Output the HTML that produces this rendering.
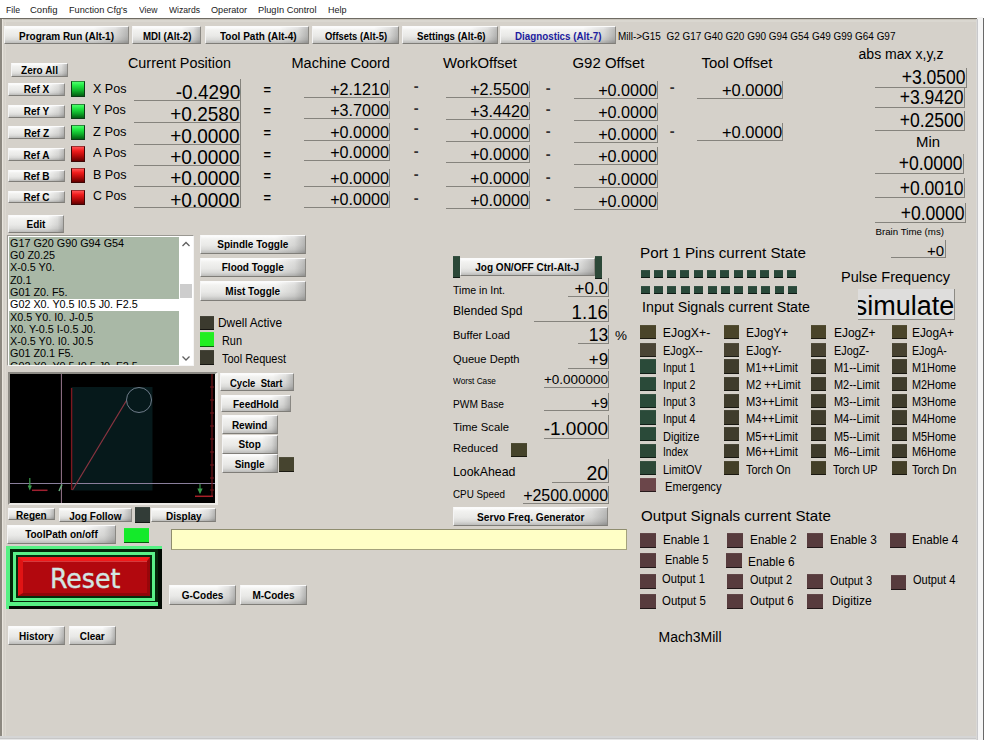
<!DOCTYPE html>
<html lang="en"><head><meta charset="utf-8"><title>Mach3 CNC Diagnostics</title>
<style>
html,body{margin:0;padding:0;}
body{width:984px;height:740px;overflow:hidden;background:#d5d1ca;position:relative;font-family:"Liberation Sans",sans-serif;color:#000;}
div,span,nav,section{position:absolute;box-sizing:border-box;}
.grp{left:0;top:0;width:0;height:0;}
.t{white-space:pre;line-height:1;}
.btn{background:linear-gradient(90deg,rgba(0,0,0,0) 0%,rgba(0,0,0,0) 72%,rgba(0,0,0,.09) 90%,rgba(0,0,0,.24) 100%),linear-gradient(180deg,#fdfdfd 0%,#f2f2f0 18%,#e9e9e7 55%,#dbdbd9 78%,#bcbcba 100%);border-top:1px solid #fbfbfb;border-left:1px solid #f4f4f4;border-right:1px solid #8a8883;border-bottom:1px solid #7f7d78;}
.lg{background:linear-gradient(180deg,#4cff6c 0%,#1fe642 28%,#0fae2a 62%,#045c12 100%);border:1px solid #0c3a16;border-top-color:#2a8a3a;}
.lr{background:linear-gradient(180deg,#ff5252 0%,#f01c1c 28%,#b80a0a 62%,#640000 100%);border:1px solid #3c0606;border-top-color:#a03030;}
.ld{border-bottom:1.2px solid rgba(0,0,0,.62);border-top:1px solid rgba(255,255,255,.06);}
</style></head>
<body>
<div id="chrome" class="grp" aria-label="Window frame">
<div style="left:0.00px;top:0.00px;width:984.00px;height:18.00px;background:#fff;"></div>
<div style="left:0.00px;top:18.00px;width:984.00px;height:722.00px;background:#d5d1ca;"></div>
<div style="left:0.00px;top:18.00px;width:977.00px;height:1.00px;background:#6f6b63;"></div>
<div style="left:0.00px;top:19.00px;width:977.00px;height:1.00px;background:#c9c5bc;"></div>
<div style="left:0.00px;top:20.00px;width:977.00px;height:2.00px;background:#dad7d0;"></div>
<div style="left:0.00px;top:19.00px;width:2.00px;height:721.00px;background:#8c8880;"></div>
<div style="left:2.00px;top:19.00px;width:1.00px;height:721.00px;background:#e9e5de;"></div>
<div style="left:3.00px;top:20.00px;width:1.00px;height:720.00px;background:#d9d5cd;"></div>
<div style="left:5.00px;top:20.00px;width:1.00px;height:716.00px;background:#dcd8d1;"></div>
<div style="left:0.00px;top:736.00px;width:984.00px;height:2.00px;background:#d5d5d5;"></div>
<div style="left:0.00px;top:738.00px;width:984.00px;height:1.00px;background:#c7c7c7;"></div>
<div style="left:0.00px;top:739.00px;width:984.00px;height:1.00px;background:#e7e7e7;"></div>
<div style="left:976.00px;top:19.00px;width:1.00px;height:721.00px;background:#d9d8d5;"></div>
<div style="left:977.00px;top:17.00px;width:6.00px;height:723.00px;background:#f5f5f5;"></div>
<div style="left:977.00px;top:19.00px;width:1.00px;height:721.00px;background:#c8c8cb;"></div>
<div style="left:983.00px;top:18.00px;width:1.00px;height:722.00px;background:#686868;"></div>
</div>
<nav id="menubar" class="grp" aria-label="Menu bar">
<span class="t" style="left:5.50px;top:5.00px;font-size:9.60px;color:#1a1a1a;transform:scaleX(0.906);transform-origin:0 50%;">File</span>
<span class="t" style="left:30.00px;top:5.00px;font-size:9.60px;color:#1a1a1a;transform:scaleX(0.991);transform-origin:0 50%;">Config</span>
<span class="t" style="left:69.00px;top:5.00px;font-size:9.60px;color:#1a1a1a;transform:scaleX(0.958);transform-origin:0 50%;">Function Cfg&#x27;s</span>
<span class="t" style="left:139.00px;top:5.00px;font-size:9.60px;color:#1a1a1a;transform:scaleX(0.896);transform-origin:0 50%;">View</span>
<span class="t" style="left:169.00px;top:5.00px;font-size:9.60px;color:#1a1a1a;transform:scaleX(0.895);transform-origin:0 50%;">Wizards</span>
<span class="t" style="left:211.00px;top:5.00px;font-size:9.60px;color:#1a1a1a;transform:scaleX(0.951);transform-origin:0 50%;">Operator</span>
<span class="t" style="left:258.00px;top:5.00px;font-size:9.60px;color:#1a1a1a;transform:scaleX(0.962);transform-origin:0 50%;">PlugIn Control</span>
<span class="t" style="left:328.00px;top:5.00px;font-size:9.60px;color:#1a1a1a;transform:scaleX(0.938);transform-origin:0 50%;">Help</span>
</nav>
<nav id="screen-tabs" class="grp" aria-label="Screen tabs">
<div class="btn" style="left:4.00px;top:26.00px;width:125.00px;height:18.00px;"><span class="t" style="left:14.00px;top:5.00px;font-size:10.30px;font-weight:bold;transform:scaleX(0.971);transform-origin:0 50%;">Program Run (Alt-1)</span></div>
<div class="btn" style="left:132.00px;top:26.00px;width:69.00px;height:18.00px;"><span class="t" style="left:9.50px;top:5.00px;font-size:10.30px;font-weight:bold;transform:scaleX(0.942);transform-origin:0 50%;">MDI (Alt-2)</span></div>
<div class="btn" style="left:205.00px;top:26.00px;width:103.50px;height:18.00px;"><span class="t" style="left:13.50px;top:5.00px;font-size:10.30px;font-weight:bold;transform:scaleX(0.972);transform-origin:0 50%;">Tool Path (Alt-4)</span></div>
<div class="btn" style="left:312.00px;top:26.00px;width:86.50px;height:18.00px;"><span class="t" style="left:12.00px;top:5.00px;font-size:10.30px;font-weight:bold;transform:scaleX(0.911);transform-origin:0 50%;">Offsets (Alt-5)</span></div>
<div class="btn" style="left:401.50px;top:26.00px;width:96.00px;height:18.00px;"><span class="t" style="left:14.00px;top:5.00px;font-size:10.30px;font-weight:bold;transform:scaleX(0.935);transform-origin:0 50%;">Settings (Alt-6)</span></div>
<div class="btn" style="left:499.50px;top:26.00px;width:116.50px;height:18.00px;"><span class="t" style="left:14.50px;top:5.00px;font-size:10.30px;font-weight:bold;color:#1c1c9e;transform:scaleX(0.951);transform-origin:0 50%;">Diagnostics (Alt-7)</span></div>
<span class="t" style="left:618.00px;top:31.00px;font-size:11.30px;transform:scaleX(0.881);transform-origin:0 50%;">Mill-&gt;G15  G2 G17 G40 G20 G90 G94 G54 G49 G99 G64 G97</span>
</nav>
<section id="axis-dros" class="grp" aria-label="Axis positions and offsets">
<span class="t" style="left:128.00px;top:56.00px;font-size:14.37px;">Current Position</span>
<span class="t" style="left:291.50px;top:56.00px;font-size:14.53px;">Machine Coord</span>
<span class="t" style="left:443.00px;top:56.00px;font-size:14.90px;">WorkOffset</span>
<span class="t" style="left:572.50px;top:56.00px;font-size:14.95px;">G92 Offset</span>
<span class="t" style="left:701.50px;top:56.00px;font-size:14.92px;">Tool Offset</span>
<span class="t" style="left:858.50px;top:47.00px;font-size:14.07px;">abs max x,y,z</span>
<div class="btn" style="left:11.00px;top:63.00px;width:57.00px;height:13.50px;"><span class="t" style="left:9.07px;top:2.00px;font-size:10.00px;font-weight:bold;">Zero All</span></div>
<div class="btn" style="left:8.00px;top:82.50px;width:57.00px;height:13.00px;"><span class="t" style="left:14.73px;top:1.50px;font-size:10.00px;font-weight:bold;">Ref X</span></div>
<div class="lg" style="left:70.50px;top:81.00px;width:14.50px;height:15.70px;"></div>
<span class="t" style="left:92.50px;top:83.00px;font-size:12.60px;transform:scaleX(0.996);transform-origin:0 50%;">X Pos</span>
<div class="btn" style="left:8.00px;top:104.50px;width:57.00px;height:13.00px;"><span class="t" style="left:14.80px;top:1.50px;font-size:10.00px;font-weight:bold;">Ref Y</span></div>
<div class="lg" style="left:70.50px;top:103.80px;width:14.50px;height:15.20px;"></div>
<span class="t" style="left:92.50px;top:104.00px;font-size:12.60px;">Y Pos</span>
<div class="btn" style="left:8.00px;top:126.00px;width:57.00px;height:13.00px;"><span class="t" style="left:15.00px;top:2.00px;font-size:10.00px;font-weight:bold;">Ref Z</span></div>
<div class="lg" style="left:70.50px;top:125.00px;width:14.50px;height:15.00px;"></div>
<span class="t" style="left:92.50px;top:126.00px;font-size:12.60px;transform:scaleX(1.019);transform-origin:0 50%;">Z Pos</span>
<div class="btn" style="left:8.00px;top:148.00px;width:57.00px;height:12.50px;"><span class="t" style="left:14.62px;top:2.00px;font-size:10.00px;font-weight:bold;">Ref A</span></div>
<div class="lr" style="left:70.50px;top:146.00px;width:14.50px;height:15.50px;"></div>
<span class="t" style="left:92.50px;top:147.00px;font-size:12.60px;transform:scaleX(1.017);transform-origin:0 50%;">A Pos</span>
<div class="btn" style="left:8.00px;top:169.50px;width:57.00px;height:12.50px;"><span class="t" style="left:14.45px;top:1.50px;font-size:10.00px;font-weight:bold;">Ref B</span></div>
<div class="lr" style="left:70.50px;top:168.00px;width:14.50px;height:15.00px;"></div>
<span class="t" style="left:92.50px;top:169.00px;font-size:12.60px;transform:scaleX(0.996);transform-origin:0 50%;">B Pos</span>
<div class="btn" style="left:8.00px;top:190.50px;width:57.00px;height:12.50px;"><span class="t" style="left:14.45px;top:1.50px;font-size:10.00px;font-weight:bold;">Ref C</span></div>
<div class="lr" style="left:70.50px;top:189.50px;width:14.50px;height:15.00px;"></div>
<span class="t" style="left:92.50px;top:190.00px;font-size:12.60px;transform:scaleX(0.976);transform-origin:0 50%;">C Pos</span>
<div class="dro" style="left:134.00px;top:78.70px;width:106.90px;height:22.00px;border-bottom:1px solid #85837d;border-right:1px solid #85837d;"></div>
<span class="t" style="left:168.51px;top:81.00px;font-size:21.00px;transform:scaleX(0.905);transform-origin:100% 50%;">-0.4290</span>
<div class="dro" style="left:134.00px;top:100.60px;width:106.90px;height:22.00px;border-bottom:1px solid #85837d;border-right:1px solid #85837d;"></div>
<span class="t" style="left:163.16px;top:103.00px;font-size:21.00px;transform:scaleX(0.905);transform-origin:100% 50%;">+0.2580</span>
<div class="dro" style="left:134.00px;top:122.60px;width:106.90px;height:22.00px;border-bottom:1px solid #85837d;border-right:1px solid #85837d;"></div>
<span class="t" style="left:163.16px;top:125.00px;font-size:21.00px;transform:scaleX(0.905);transform-origin:100% 50%;">+0.0000</span>
<div class="dro" style="left:134.00px;top:143.70px;width:106.90px;height:22.00px;border-bottom:1px solid #85837d;border-right:1px solid #85837d;"></div>
<span class="t" style="left:163.16px;top:146.00px;font-size:21.00px;transform:scaleX(0.905);transform-origin:100% 50%;">+0.0000</span>
<div class="dro" style="left:134.00px;top:165.40px;width:106.90px;height:22.00px;border-bottom:1px solid #85837d;border-right:1px solid #85837d;"></div>
<span class="t" style="left:163.16px;top:167.00px;font-size:21.00px;transform:scaleX(0.905);transform-origin:100% 50%;">+0.0000</span>
<div class="dro" style="left:134.00px;top:186.10px;width:106.90px;height:22.00px;border-bottom:1px solid #85837d;border-right:1px solid #85837d;"></div>
<span class="t" style="left:163.16px;top:189.00px;font-size:21.00px;transform:scaleX(0.905);transform-origin:100% 50%;">+0.0000</span>
<span class="t" style="left:263.50px;top:84.00px;font-size:12.82px;font-weight:bold;">=</span>
<span class="t" style="left:263.50px;top:105.00px;font-size:12.82px;font-weight:bold;">=</span>
<span class="t" style="left:263.50px;top:127.00px;font-size:12.82px;font-weight:bold;">=</span>
<span class="t" style="left:263.50px;top:149.00px;font-size:12.82px;font-weight:bold;">=</span>
<span class="t" style="left:263.50px;top:170.00px;font-size:12.82px;font-weight:bold;">=</span>
<span class="t" style="left:263.50px;top:192.00px;font-size:12.82px;font-weight:bold;">=</span>
<div class="dro" style="left:304.00px;top:80.00px;width:85.80px;height:17.70px;border-bottom:1px solid #85837d;border-right:1px solid #85837d;"></div>
<span class="t" style="left:327.87px;top:82.00px;font-size:16.80px;transform:scaleX(0.965);transform-origin:100% 50%;">+2.1210</span>
<div class="dro" style="left:304.00px;top:101.00px;width:85.80px;height:17.70px;border-bottom:1px solid #85837d;border-right:1px solid #85837d;"></div>
<span class="t" style="left:327.87px;top:103.00px;font-size:16.80px;transform:scaleX(0.965);transform-origin:100% 50%;">+3.7000</span>
<div class="dro" style="left:304.00px;top:123.00px;width:85.80px;height:17.70px;border-bottom:1px solid #85837d;border-right:1px solid #85837d;"></div>
<span class="t" style="left:327.87px;top:125.00px;font-size:16.80px;transform:scaleX(0.965);transform-origin:100% 50%;">+0.0000</span>
<div class="dro" style="left:304.00px;top:143.50px;width:85.80px;height:17.70px;border-bottom:1px solid #85837d;border-right:1px solid #85837d;"></div>
<span class="t" style="left:327.87px;top:145.00px;font-size:16.80px;transform:scaleX(0.965);transform-origin:100% 50%;">+0.0000</span>
<div class="dro" style="left:304.00px;top:169.00px;width:85.80px;height:17.70px;border-bottom:1px solid #85837d;border-right:1px solid #85837d;"></div>
<span class="t" style="left:327.87px;top:171.00px;font-size:16.80px;transform:scaleX(0.965);transform-origin:100% 50%;">+0.0000</span>
<div class="dro" style="left:304.00px;top:190.50px;width:85.80px;height:17.70px;border-bottom:1px solid #85837d;border-right:1px solid #85837d;"></div>
<span class="t" style="left:327.87px;top:192.00px;font-size:16.80px;transform:scaleX(0.965);transform-origin:100% 50%;">+0.0000</span>
<span class="t" style="left:413.80px;top:79.00px;font-size:14.63px;font-weight:bold;color:#333;">-</span>
<span class="t" style="left:413.80px;top:101.00px;font-size:14.63px;font-weight:bold;color:#333;">-</span>
<span class="t" style="left:413.80px;top:121.00px;font-size:14.63px;font-weight:bold;color:#333;">-</span>
<span class="t" style="left:413.80px;top:144.00px;font-size:14.63px;font-weight:bold;color:#333;">-</span>
<span class="t" style="left:413.80px;top:167.00px;font-size:14.63px;font-weight:bold;color:#333;">-</span>
<span class="t" style="left:413.80px;top:191.00px;font-size:14.63px;font-weight:bold;color:#333;">-</span>
<div class="dro" style="left:445.50px;top:80.50px;width:84.60px;height:17.70px;border-bottom:1px solid #85837d;border-right:1px solid #85837d;"></div>
<span class="t" style="left:468.17px;top:82.00px;font-size:16.80px;transform:scaleX(0.965);transform-origin:100% 50%;">+2.5500</span>
<div class="dro" style="left:445.50px;top:102.00px;width:84.60px;height:17.70px;border-bottom:1px solid #85837d;border-right:1px solid #85837d;"></div>
<span class="t" style="left:468.17px;top:104.00px;font-size:16.80px;transform:scaleX(0.965);transform-origin:100% 50%;">+3.4420</span>
<div class="dro" style="left:445.50px;top:124.00px;width:84.60px;height:17.70px;border-bottom:1px solid #85837d;border-right:1px solid #85837d;"></div>
<span class="t" style="left:468.17px;top:126.00px;font-size:16.80px;transform:scaleX(0.965);transform-origin:100% 50%;">+0.0000</span>
<div class="dro" style="left:445.50px;top:145.00px;width:84.60px;height:17.70px;border-bottom:1px solid #85837d;border-right:1px solid #85837d;"></div>
<span class="t" style="left:468.17px;top:147.00px;font-size:16.80px;transform:scaleX(0.965);transform-origin:100% 50%;">+0.0000</span>
<div class="dro" style="left:445.50px;top:169.00px;width:84.60px;height:17.70px;border-bottom:1px solid #85837d;border-right:1px solid #85837d;"></div>
<span class="t" style="left:468.17px;top:171.00px;font-size:16.80px;transform:scaleX(0.965);transform-origin:100% 50%;">+0.0000</span>
<div class="dro" style="left:445.50px;top:191.00px;width:84.60px;height:17.70px;border-bottom:1px solid #85837d;border-right:1px solid #85837d;"></div>
<span class="t" style="left:468.17px;top:193.00px;font-size:16.80px;transform:scaleX(0.965);transform-origin:100% 50%;">+0.0000</span>
<span class="t" style="left:545.80px;top:81.00px;font-size:14.63px;font-weight:bold;color:#333;">-</span>
<span class="t" style="left:545.80px;top:102.00px;font-size:14.63px;font-weight:bold;color:#333;">-</span>
<span class="t" style="left:545.80px;top:124.00px;font-size:14.63px;font-weight:bold;color:#333;">-</span>
<span class="t" style="left:545.80px;top:147.00px;font-size:14.63px;font-weight:bold;color:#333;">-</span>
<span class="t" style="left:545.80px;top:170.00px;font-size:14.63px;font-weight:bold;color:#333;">-</span>
<span class="t" style="left:545.80px;top:192.00px;font-size:14.63px;font-weight:bold;color:#333;">-</span>
<div class="dro" style="left:573.50px;top:81.00px;width:84.60px;height:17.70px;border-bottom:1px solid #85837d;border-right:1px solid #85837d;"></div>
<span class="t" style="left:596.17px;top:83.00px;font-size:16.80px;transform:scaleX(0.965);transform-origin:100% 50%;">+0.0000</span>
<div class="dro" style="left:573.50px;top:103.00px;width:84.60px;height:17.70px;border-bottom:1px solid #85837d;border-right:1px solid #85837d;"></div>
<span class="t" style="left:596.17px;top:105.00px;font-size:16.80px;transform:scaleX(0.965);transform-origin:100% 50%;">+0.0000</span>
<div class="dro" style="left:573.50px;top:125.00px;width:84.60px;height:17.70px;border-bottom:1px solid #85837d;border-right:1px solid #85837d;"></div>
<span class="t" style="left:596.17px;top:127.00px;font-size:16.80px;transform:scaleX(0.965);transform-origin:100% 50%;">+0.0000</span>
<div class="dro" style="left:573.50px;top:147.00px;width:84.60px;height:17.70px;border-bottom:1px solid #85837d;border-right:1px solid #85837d;"></div>
<span class="t" style="left:596.17px;top:149.00px;font-size:16.80px;transform:scaleX(0.965);transform-origin:100% 50%;">+0.0000</span>
<div class="dro" style="left:573.50px;top:170.00px;width:84.60px;height:17.70px;border-bottom:1px solid #85837d;border-right:1px solid #85837d;"></div>
<span class="t" style="left:596.17px;top:172.00px;font-size:16.80px;transform:scaleX(0.965);transform-origin:100% 50%;">+0.0000</span>
<div class="dro" style="left:573.50px;top:192.00px;width:84.60px;height:17.70px;border-bottom:1px solid #85837d;border-right:1px solid #85837d;"></div>
<span class="t" style="left:596.17px;top:194.00px;font-size:16.80px;transform:scaleX(0.965);transform-origin:100% 50%;">+0.0000</span>
<span class="t" style="left:669.80px;top:80.00px;font-size:14.63px;font-weight:bold;color:#333;">-</span>
<span class="t" style="left:669.80px;top:124.00px;font-size:14.63px;font-weight:bold;color:#333;">-</span>
<div class="dro" style="left:696.50px;top:81.00px;width:86.30px;height:17.70px;border-bottom:1px solid #85837d;border-right:1px solid #85837d;"></div>
<span class="t" style="left:720.96px;top:83.00px;font-size:16.80px;transform:scaleX(0.985);transform-origin:100% 50%;">+0.0000</span>
<div class="dro" style="left:696.50px;top:123.00px;width:86.30px;height:17.70px;border-bottom:1px solid #85837d;border-right:1px solid #85837d;"></div>
<span class="t" style="left:720.96px;top:125.00px;font-size:16.80px;transform:scaleX(0.985);transform-origin:100% 50%;">+0.0000</span>
<div class="dro" style="left:875.00px;top:68.00px;width:91.50px;height:20.00px;border-bottom:1px solid #85837d;border-right:1px solid #85837d;"></div>
<span class="t" style="left:894.79px;top:68.00px;font-size:19.40px;transform:scaleX(0.905);transform-origin:100% 50%;">+3.0500</span>
<div class="dro" style="left:875.00px;top:88.00px;width:89.50px;height:20.00px;border-bottom:1px solid #85837d;border-right:1px solid #85837d;"></div>
<span class="t" style="left:892.79px;top:88.00px;font-size:19.40px;transform:scaleX(0.905);transform-origin:100% 50%;">+3.9420</span>
<div class="dro" style="left:875.00px;top:111.00px;width:89.50px;height:20.00px;border-bottom:1px solid #85837d;border-right:1px solid #85837d;"></div>
<span class="t" style="left:892.79px;top:111.00px;font-size:19.40px;transform:scaleX(0.905);transform-origin:100% 50%;">+0.2500</span>
<div class="dro" style="left:875.00px;top:154.00px;width:88.50px;height:20.00px;border-bottom:1px solid #85837d;border-right:1px solid #85837d;"></div>
<span class="t" style="left:891.79px;top:154.00px;font-size:19.40px;transform:scaleX(0.905);transform-origin:100% 50%;">+0.0000</span>
<div class="dro" style="left:875.00px;top:178.00px;width:89.50px;height:20.00px;border-bottom:1px solid #85837d;border-right:1px solid #85837d;"></div>
<span class="t" style="left:892.79px;top:179.00px;font-size:19.40px;transform:scaleX(0.905);transform-origin:100% 50%;">+0.0010</span>
<div class="dro" style="left:875.00px;top:203.00px;width:90.50px;height:20.00px;border-bottom:1px solid #85837d;border-right:1px solid #85837d;"></div>
<span class="t" style="left:893.79px;top:204.00px;font-size:19.40px;transform:scaleX(0.905);transform-origin:100% 50%;">+0.0000</span>
<span class="t" style="left:916.00px;top:135.00px;font-size:14.91px;">Min</span>
<span class="t" style="left:875.50px;top:227.00px;font-size:9.71px;">Brain Time (ms)</span>
<div class="dro" style="left:891.00px;top:240.00px;width:54.50px;height:18.00px;border-bottom:1px solid #85837d;border-right:1px solid #85837d;"></div>
<span class="t" style="left:926.90px;top:243.00px;font-size:15.00px;">+0</span>
</section>
<section id="gcode-panel" class="grp" aria-label="G-code listing and coolant/spindle toggles">
<div class="btn" style="left:8.00px;top:215.00px;width:56.00px;height:17.50px;"><span class="t" style="left:17.55px;top:4.00px;font-size:10.00px;font-weight:bold;">Edit</span></div>
<div style="left:7.00px;top:235.00px;width:186.50px;height:131.00px;background:#fff;border:1px solid #f6f6f6;border-top-color:#9a9892;border-left-color:#9a9892;"></div>
<div class="gl" style="left:9.00px;top:237.00px;width:170.00px;height:128.00px;background:#a9b8a6;overflow:hidden;"></div>
<div style="left:9.00px;top:299.00px;width:170.00px;height:11.50px;background:#fff;"></div>
<div style="left:9px;top:237px;width:170px;height:128px;overflow:hidden;">
<span class="t" style="left:1.00px;top:1.00px;font-size:10.80px;">G17 G20 G90 G94 G54</span>
<span class="t" style="left:1.00px;top:13.00px;font-size:10.80px;">G0 Z0.25</span>
<span class="t" style="left:1.00px;top:25.00px;font-size:10.80px;">X-0.5 Y0.</span>
<span class="t" style="left:1.00px;top:38.00px;font-size:10.80px;">Z0.1</span>
<span class="t" style="left:1.00px;top:50.00px;font-size:10.80px;">G01 Z0. F5.</span>
<span class="t" style="left:1.00px;top:62.00px;font-size:10.80px;">G02 X0. Y0.5 I0.5 J0. F2.5</span>
<span class="t" style="left:1.00px;top:75.00px;font-size:10.80px;">X0.5 Y0. I0. J-0.5</span>
<span class="t" style="left:1.00px;top:87.00px;font-size:10.80px;">X0. Y-0.5 I-0.5 J0.</span>
<span class="t" style="left:1.00px;top:99.00px;font-size:10.80px;">X-0.5 Y0. I0. J0.5</span>
<span class="t" style="left:1.00px;top:111.00px;font-size:10.80px;">G01 Z0.1 F5.</span>
<span class="t" style="left:1.00px;top:124.00px;font-size:10.80px;">G02 X0. Y0.5 I0.5 J0. F2.5</span>
</div>
<div style="left:179.00px;top:237.00px;width:13.50px;height:128.00px;background:#fff;"></div>
<div style="left:180.00px;top:284.00px;width:11.50px;height:13.50px;background:#cdcdcd;"></div>
<svg style="position:absolute;left:179px;top:237px" width="14" height="128" viewBox="0 0 14 128"><path d="M3.5 9 L7 5.5 L10.5 9" fill="none" stroke="#606060" stroke-width="1.3"/><path d="M3.5 119.5 L7 123 L10.5 119.5" fill="none" stroke="#606060" stroke-width="1.3"/></svg>
<div class="btn" style="left:200.00px;top:234.80px;width:105.50px;height:18.80px;"><span class="t" style="left:16.30px;top:4.20px;font-size:10.00px;font-weight:bold;">Spindle Toggle</span></div>
<div class="btn" style="left:200.00px;top:258.00px;width:105.50px;height:18.80px;"><span class="t" style="left:20.75px;top:4.00px;font-size:10.00px;font-weight:bold;">Flood Toggle</span></div>
<div class="btn" style="left:200.00px;top:281.20px;width:105.50px;height:19.60px;"><span class="t" style="left:24.35px;top:4.80px;font-size:10.00px;font-weight:bold;">Mist Toggle</span></div>
<div class="ld" style="left:200.00px;top:315.50px;width:14.00px;height:14.00px;background:#3b3a2e;"></div>
<div class="ld" style="left:200.00px;top:332.00px;width:14.00px;height:15.00px;background:#22ee22;"></div>
<div class="ld" style="left:200.00px;top:350.00px;width:14.00px;height:14.50px;background:#3b3a2e;"></div>
<span class="t" style="left:218.00px;top:316.00px;font-size:13.00px;transform:scaleX(0.913);transform-origin:0 50%;">Dwell Active</span>
<span class="t" style="left:222.00px;top:335.00px;font-size:12.60px;transform:scaleX(0.865);transform-origin:0 50%;">Run</span>
<span class="t" style="left:222.00px;top:353.00px;font-size:12.60px;transform:scaleX(0.870);transform-origin:0 50%;">Tool Request</span>
</section>
<section id="toolpath-panel" class="grp" aria-label="Tool path display and run controls">
<div style="left:8.00px;top:372.00px;width:209.50px;height:133.00px;background:#000;border:2px solid #eeece8;border-right-width:3px;border-top-color:#8c8a84;border-left-color:#8c8a84;"></div>
<svg style="position:absolute;left:10px;top:374px" width="204.5" height="129" viewBox="10 374 204.5 129">
<rect x="71.5" y="387" width="81" height="103.5" fill="#06191b"/>
<line x1="61.4" y1="374" x2="61.4" y2="503" stroke="#9a7890" stroke-width="1"/>
<line x1="10" y1="483.5" x2="216" y2="483.5" stroke="#8a7f9c" stroke-width="1"/>
<line x1="71.6" y1="388" x2="71.6" y2="490" stroke="#7c1820" stroke-width="1.4"/>
<line x1="72.5" y1="490" x2="126.5" y2="400.5" stroke="#8a3440" stroke-width="1.2"/>
<circle cx="139" cy="400" r="12.5" fill="none" stroke="#6f7c8a" stroke-width="1"/>
<line x1="212" y1="374" x2="212" y2="497" stroke="#74141a" stroke-width="1.2"/>
<path d="M210 387h4M210 400h4M210 413h4M210 426h4M210 439h4M210 452h4M210 465h4M210 478h4M210 490h4" stroke="#74141a" stroke-width="1"/>
<line x1="32" y1="490.3" x2="47.5" y2="490.3" stroke="#a02030" stroke-width="1.5"/>
<path d="M29.8 478v9M28.3 485.5l1.5 3.5l1.5-3.5" stroke="#3a9a4c" stroke-width="1.2" fill="none"/>
<path d="M59 491l3-6.5" stroke="#6ab080" stroke-width="1.5"/>
<path d="M200 484v8M198.2 489l1.8 4l1.8-4z" stroke="#3a9a4c" stroke-width="1.1" fill="#3a9a4c"/>
<line x1="195" y1="496.3" x2="213" y2="496.3" stroke="#a82028" stroke-width="1.5"/>
</svg>
<div class="btn" style="left:7.50px;top:508.20px;width:47.80px;height:12.10px;"><span class="t" style="left:7.62px;top:1.80px;font-size:10.00px;font-weight:bold;">Regen</span></div>
<div class="btn" style="left:58.50px;top:508.30px;width:73.80px;height:14.00px;"><span class="t" style="left:9.78px;top:2.70px;font-size:10.00px;font-weight:bold;">Jog Follow</span></div>
<div class="ld" style="left:135.20px;top:507.40px;width:14.80px;height:15.40px;background:#323c37;"></div>
<div class="btn" style="left:151.30px;top:508.30px;width:65.00px;height:14.00px;"><span class="t" style="left:13.72px;top:2.70px;font-size:10.00px;font-weight:bold;">Display</span></div>
<div class="btn" style="left:7.30px;top:524.50px;width:108.30px;height:19.00px;"><span class="t" style="left:16.85px;top:4.50px;font-size:10.00px;font-weight:bold;">ToolPath on/off</span></div>
<div class="ld" style="left:124.00px;top:528.30px;width:25.00px;height:15.10px;background:#14ea2a;"></div>
<div style="left:170.70px;top:528.80px;width:456.30px;height:21.10px;background:#ffffc6;border:1.2px solid #a4a27c;border-top-color:#8f8d6e;border-left-color:#8f8d6e;"></div>
<div class="btn" style="left:220.00px;top:373.00px;width:74.00px;height:18.40px;"><span class="t" style="left:9.00px;top:5.00px;font-size:10.20px;font-weight:bold;transform:scaleX(0.933);transform-origin:0 50%;">Cycle  Start</span></div>
<div class="btn" style="left:220.50px;top:394.50px;width:70.50px;height:17.80px;"><span class="t" style="left:11.47px;top:4.50px;font-size:10.00px;font-weight:bold;">FeedHold</span></div>
<div class="btn" style="left:221.50px;top:415.30px;width:56.30px;height:18.50px;"><span class="t" style="left:9.38px;top:4.70px;font-size:10.00px;font-weight:bold;">Rewind</span></div>
<div class="btn" style="left:221.50px;top:434.60px;width:56.30px;height:19.00px;"><span class="t" style="left:16.05px;top:4.40px;font-size:10.00px;font-weight:bold;">Stop</span></div>
<div class="btn" style="left:221.50px;top:454.20px;width:56.30px;height:18.50px;"><span class="t" style="left:12.15px;top:4.80px;font-size:10.00px;font-weight:bold;">Single</span></div>
<div class="ld" style="left:279.30px;top:456.90px;width:15.10px;height:15.50px;background:#46442f;"></div>
</section>
<section id="reset-panel" class="grp" aria-label="Reset and reference buttons">
<div style="left:6.40px;top:545.60px;width:155.60px;height:63.10px;background:#030a04;"></div>
<div style="left:6.40px;top:545.60px;width:151.30px;height:60.40px;background:#56f084;"></div>
<div style="left:6.40px;top:545.60px;width:155.60px;height:3.20px;background:#56f084;"></div>
<div style="left:6.40px;top:545.60px;width:3.10px;height:63.10px;background:#56f084;"></div>
<div style="left:9.50px;top:548.80px;width:148.20px;height:52.80px;background:#04260a;"></div>
<div style="left:12.80px;top:552.00px;width:142.30px;height:49.40px;background:#052c0c;border:3px solid #5af088;"></div>
<div style="left:18.30px;top:556.60px;width:131.70px;height:39.30px;background:#b2080e;border-top:4.5px solid #f01a1a;border-left:5px solid #e01414;border-right:3px solid #98060a;border-bottom:3.5px solid #90060a;"></div>
<div style="left:23.30px;top:560.60px;width:123.70px;height:1.00px;background:rgba(255,120,120,.45);"></div>
<span class="t" style="left:50.30px;top:565.00px;font-size:27.30px;color:#d2e6e2;font-family:'DejaVu Sans Condensed', 'DejaVu Sans', 'Liberation Sans', sans-serif;font-stretch:condensed;transform:scaleX(1.027);transform-origin:0 50%;-webkit-text-stroke:0.35px #d2e6e2;">Reset</span>
<div class="btn" style="left:169.00px;top:585.30px;width:67.10px;height:19.30px;"><span class="t" style="left:11.73px;top:4.70px;font-size:10.00px;font-weight:bold;">G-Codes</span></div>
<div class="btn" style="left:239.70px;top:585.30px;width:67.60px;height:19.30px;"><span class="t" style="left:11.70px;top:4.70px;font-size:10.00px;font-weight:bold;">M-Codes</span></div>
<div class="btn" style="left:8.00px;top:626.00px;width:56.50px;height:18.50px;"><span class="t" style="left:10.03px;top:5.00px;font-size:10.00px;font-weight:bold;">History</span></div>
<div class="btn" style="left:69.00px;top:626.00px;width:46.50px;height:18.50px;"><span class="t" style="left:9.75px;top:5.00px;font-size:10.00px;font-weight:bold;">Clear</span></div>
</section>
<section id="timing-panel" class="grp" aria-label="Jog and timing diagnostics">
<div class="ld" style="left:453.00px;top:256.00px;width:7.00px;height:21.50px;background:#2c4838;"></div>
<div class="ld" style="left:594.50px;top:256.00px;width:7.50px;height:23.00px;background:#2c4838;"></div>
<div class="btn" style="left:460.00px;top:258.00px;width:134.50px;height:18.00px;"><span class="t" style="left:14.30px;top:4.00px;font-size:10.00px;font-weight:bold;">Jog ON/OFF Ctrl-Alt-J</span></div>
<span class="t" style="left:453.00px;top:284.00px;font-size:11.60px;transform:scaleX(0.913);transform-origin:0 50%;">Time in Int.</span>
<div class="dro" style="left:568.00px;top:278.00px;width:40.90px;height:19.00px;border-bottom:1px solid #85837d;border-right:1px solid #85837d;"></div>
<span class="t" style="left:574.53px;top:280.00px;font-size:17.00px;">+0.0</span>
<span class="t" style="left:453.00px;top:305.00px;font-size:12.14px;">Blended Spd</span>
<div class="dro" style="left:534.00px;top:299.00px;width:74.90px;height:23.00px;border-bottom:1px solid #85837d;border-right:1px solid #85837d;"></div>
<span class="t" style="left:570.17px;top:303.00px;font-size:19.50px;transform:scaleX(0.960);transform-origin:100% 50%;">1.16</span>
<span class="t" style="left:453.00px;top:330.00px;font-size:11.06px;">Buffer Load</span>
<div class="dro" style="left:578.00px;top:325.00px;width:30.90px;height:19.00px;border-bottom:1px solid #85837d;border-right:1px solid #85837d;"></div>
<span class="t" style="left:588.68px;top:327.00px;font-size:17.50px;">13</span>
<span class="t" style="left:615.00px;top:329.00px;font-size:13.48px;">%</span>
<span class="t" style="left:453.00px;top:354.00px;font-size:11.18px;">Queue Depth</span>
<div class="dro" style="left:567.50px;top:349.00px;width:41.40px;height:20.00px;border-bottom:1px solid #85837d;border-right:1px solid #85837d;"></div>
<span class="t" style="left:588.72px;top:351.00px;font-size:17.00px;">+9</span>
<span class="t" style="left:453.00px;top:376.00px;font-size:9.40px;transform:scaleX(0.879);transform-origin:0 50%;">Worst Case</span>
<div class="dro" style="left:544.00px;top:371.00px;width:64.90px;height:17.00px;border-bottom:1px solid #85837d;border-right:1px solid #85837d;"></div>
<span class="t" style="left:543.91px;top:373.00px;font-size:13.50px;">+0.000000</span>
<span class="t" style="left:453.00px;top:399.00px;font-size:11.00px;transform:scaleX(0.927);transform-origin:0 50%;">PWM Base</span>
<div class="dro" style="left:544.00px;top:393.00px;width:64.90px;height:18.00px;border-bottom:1px solid #85837d;border-right:1px solid #85837d;"></div>
<span class="t" style="left:591.00px;top:395.00px;font-size:15.00px;">+9</span>
<span class="t" style="left:453.00px;top:422.00px;font-size:11.28px;">Time Scale</span>
<div class="dro" style="left:544.00px;top:415.00px;width:64.90px;height:23.50px;border-bottom:1px solid #85837d;border-right:1px solid #85837d;"></div>
<span class="t" style="left:543.69px;top:419.00px;font-size:19.00px;">-1.0000</span>
<span class="t" style="left:453.00px;top:443.00px;font-size:11.24px;">Reduced</span>
<div class="ld" style="left:511.00px;top:443.00px;width:16.00px;height:14.00px;background:#45432a;"></div>
<span class="t" style="left:453.00px;top:466.00px;font-size:12.35px;">LookAhead</span>
<div class="dro" style="left:552.00px;top:459.00px;width:56.90px;height:24.00px;border-bottom:1px solid #85837d;border-right:1px solid #85837d;"></div>
<span class="t" style="left:586.46px;top:464.00px;font-size:19.50px;">20</span>
<span class="t" style="left:453.00px;top:489.00px;font-size:11.00px;transform:scaleX(0.895);transform-origin:0 50%;">CPU Speed</span>
<div class="dro" style="left:523.00px;top:486.00px;width:85.90px;height:17.50px;border-bottom:1px solid #85837d;border-right:1px solid #85837d;"></div>
<span class="t" style="left:523.14px;top:488.00px;font-size:16.00px;">+2500.0000</span>
<div class="btn" style="left:453.00px;top:506.80px;width:154.70px;height:18.90px;"><span class="t" style="left:23.00px;top:5.20px;font-size:10.30px;font-weight:bold;transform:scaleX(0.988);transform-origin:0 50%;">Servo Freq. Generator</span></div>
</section>
<section id="signals-panel" class="grp" aria-label="Port pins, input and output signals">
<span class="t" style="left:640.00px;top:245.00px;font-size:15.24px;">Port 1 Pins current State</span>
<div class="ld" style="left:640.50px;top:269.50px;width:9.00px;height:8.00px;background:#29493a;"></div>
<div class="ld" style="left:653.82px;top:269.50px;width:9.00px;height:8.00px;background:#29493a;"></div>
<div class="ld" style="left:667.14px;top:269.50px;width:9.00px;height:8.00px;background:#29493a;"></div>
<div class="ld" style="left:680.45px;top:269.50px;width:9.00px;height:8.00px;background:#29493a;"></div>
<div class="ld" style="left:693.77px;top:269.50px;width:9.00px;height:8.00px;background:#29493a;"></div>
<div class="ld" style="left:707.09px;top:269.50px;width:9.00px;height:8.00px;background:#29493a;"></div>
<div class="ld" style="left:720.41px;top:269.50px;width:9.00px;height:8.00px;background:#29493a;"></div>
<div class="ld" style="left:733.73px;top:269.50px;width:9.00px;height:8.00px;background:#29493a;"></div>
<div class="ld" style="left:747.05px;top:269.50px;width:9.00px;height:8.00px;background:#29493a;"></div>
<div class="ld" style="left:760.36px;top:269.50px;width:9.00px;height:8.00px;background:#29493a;"></div>
<div class="ld" style="left:773.68px;top:269.50px;width:9.00px;height:8.00px;background:#29493a;"></div>
<div class="ld" style="left:787.00px;top:269.50px;width:9.00px;height:8.00px;background:#29493a;"></div>
<div class="ld" style="left:640.50px;top:286.00px;width:9.00px;height:8.00px;background:#29493a;"></div>
<div class="ld" style="left:653.91px;top:286.00px;width:9.00px;height:8.00px;background:#29493a;"></div>
<div class="ld" style="left:667.32px;top:286.00px;width:9.00px;height:8.00px;background:#29493a;"></div>
<div class="ld" style="left:680.73px;top:286.00px;width:9.00px;height:8.00px;background:#29493a;"></div>
<div class="ld" style="left:694.14px;top:286.00px;width:9.00px;height:8.00px;background:#29493a;"></div>
<div class="ld" style="left:707.55px;top:286.00px;width:9.00px;height:8.00px;background:#29493a;"></div>
<div class="ld" style="left:720.95px;top:286.00px;width:9.00px;height:8.00px;background:#29493a;"></div>
<div class="ld" style="left:734.36px;top:286.00px;width:9.00px;height:8.00px;background:#29493a;"></div>
<div class="ld" style="left:747.77px;top:286.00px;width:9.00px;height:8.00px;background:#29493a;"></div>
<div class="ld" style="left:761.18px;top:286.00px;width:9.00px;height:8.00px;background:#29493a;"></div>
<div class="ld" style="left:774.59px;top:286.00px;width:9.00px;height:8.00px;background:#29493a;"></div>
<div class="ld" style="left:788.00px;top:286.00px;width:9.00px;height:8.00px;background:#29493a;"></div>
<span class="t" style="left:642.00px;top:300.00px;font-size:14.26px;">Input Signals current State</span>
<span class="t" style="left:841.00px;top:270.00px;font-size:14.52px;">Pulse Frequency</span>
<div style="left:858.00px;top:288.50px;width:96.50px;height:31.00px;background:#dedddc;border-right:1px solid #8c8a84;border-bottom:1px solid #8c8a84;"></div>
<div style="left:858px;top:288.5px;width:96px;height:30.5px;overflow:hidden;">
<span class="t" style="left:-4.28px;top:4.14px;font-size:27px;">simulate</span>
</div>
<div class="ld" style="left:640.30px;top:325.20px;width:15.60px;height:14.30px;background:#4a4429;"></div>
<span class="t" style="left:662.80px;top:327.00px;font-size:12.30px;">EJogX+-</span>
<div class="ld" style="left:640.30px;top:342.50px;width:15.60px;height:14.30px;background:#4a4435;"></div>
<span class="t" style="left:662.80px;top:345.00px;font-size:12.30px;transform:scaleX(0.895);transform-origin:0 50%;">EJogX--</span>
<div class="ld" style="left:640.30px;top:359.40px;width:15.60px;height:14.30px;background:#2a4a39;"></div>
<span class="t" style="left:662.80px;top:362.00px;font-size:12.30px;transform:scaleX(0.850);transform-origin:0 50%;">Input 1</span>
<div class="ld" style="left:640.30px;top:376.60px;width:15.60px;height:14.10px;background:#2a4a39;"></div>
<span class="t" style="left:662.80px;top:379.00px;font-size:12.30px;transform:scaleX(0.861);transform-origin:0 50%;">Input 2</span>
<div class="ld" style="left:640.30px;top:393.50px;width:15.60px;height:14.00px;background:#2a4a39;"></div>
<span class="t" style="left:662.80px;top:396.00px;font-size:12.30px;transform:scaleX(0.861);transform-origin:0 50%;">Input 3</span>
<div class="ld" style="left:640.30px;top:410.30px;width:15.60px;height:14.40px;background:#2a4a39;"></div>
<span class="t" style="left:662.80px;top:413.00px;font-size:12.30px;transform:scaleX(0.861);transform-origin:0 50%;">Input 4</span>
<div class="ld" style="left:640.30px;top:427.30px;width:15.60px;height:14.10px;background:#2a4a39;"></div>
<span class="t" style="left:662.80px;top:431.00px;font-size:12.30px;transform:scaleX(0.900);transform-origin:0 50%;">Digitize</span>
<div class="ld" style="left:640.30px;top:444.20px;width:15.60px;height:14.20px;background:#2c4837;"></div>
<span class="t" style="left:662.80px;top:446.00px;font-size:12.30px;transform:scaleX(0.835);transform-origin:0 50%;">Index</span>
<div class="ld" style="left:640.30px;top:461.20px;width:15.60px;height:14.20px;background:#2c4837;"></div>
<span class="t" style="left:662.80px;top:464.00px;font-size:12.30px;transform:scaleX(0.890);transform-origin:0 50%;">LimitOV</span>
<div class="ld" style="left:723.90px;top:325.20px;width:15.10px;height:14.30px;background:#4a4429;"></div>
<span class="t" style="left:745.90px;top:327.00px;font-size:12.30px;transform:scaleX(0.974);transform-origin:0 50%;">EJogY+</span>
<div class="ld" style="left:723.90px;top:342.50px;width:15.10px;height:14.30px;background:#474230;"></div>
<span class="t" style="left:745.90px;top:345.00px;font-size:12.30px;transform:scaleX(0.902);transform-origin:0 50%;">EJogY-</span>
<div class="ld" style="left:723.90px;top:359.40px;width:15.10px;height:14.30px;background:#3f3c2c;"></div>
<span class="t" style="left:745.90px;top:362.00px;font-size:12.30px;transform:scaleX(0.904);transform-origin:0 50%;">M1++Limit</span>
<div class="ld" style="left:723.90px;top:376.60px;width:15.10px;height:14.10px;background:#3f3c2c;"></div>
<span class="t" style="left:745.90px;top:379.00px;font-size:12.30px;transform:scaleX(0.896);transform-origin:0 50%;">M2 ++Limit</span>
<div class="ld" style="left:723.90px;top:393.50px;width:15.10px;height:14.00px;background:#3f3c2c;"></div>
<span class="t" style="left:745.90px;top:396.00px;font-size:12.30px;transform:scaleX(0.904);transform-origin:0 50%;">M3++Limit</span>
<div class="ld" style="left:723.90px;top:410.30px;width:15.10px;height:14.40px;background:#3f3c2c;"></div>
<span class="t" style="left:745.90px;top:413.00px;font-size:12.30px;transform:scaleX(0.904);transform-origin:0 50%;">M4++Limit</span>
<div class="ld" style="left:723.90px;top:427.30px;width:15.10px;height:14.10px;background:#3f3c2c;"></div>
<span class="t" style="left:745.90px;top:431.00px;font-size:12.30px;transform:scaleX(0.904);transform-origin:0 50%;">M5++Limit</span>
<div class="ld" style="left:723.90px;top:444.20px;width:15.10px;height:14.20px;background:#3f3c2c;"></div>
<span class="t" style="left:745.90px;top:446.00px;font-size:12.30px;transform:scaleX(0.904);transform-origin:0 50%;">M6++Limit</span>
<div class="ld" style="left:723.90px;top:461.20px;width:15.10px;height:14.20px;background:#433f28;"></div>
<span class="t" style="left:745.90px;top:464.00px;font-size:12.30px;transform:scaleX(0.894);transform-origin:0 50%;">Torch On</span>
<div class="ld" style="left:811.20px;top:325.20px;width:15.10px;height:14.30px;background:#4a4429;"></div>
<span class="t" style="left:833.70px;top:327.00px;font-size:12.30px;transform:scaleX(0.973);transform-origin:0 50%;">EJogZ+</span>
<div class="ld" style="left:811.20px;top:342.50px;width:15.10px;height:14.30px;background:#474230;"></div>
<span class="t" style="left:833.70px;top:345.00px;font-size:12.30px;transform:scaleX(0.887);transform-origin:0 50%;">EJogZ-</span>
<div class="ld" style="left:811.20px;top:359.40px;width:15.10px;height:14.30px;background:#3f3c2c;"></div>
<span class="t" style="left:833.70px;top:362.00px;font-size:12.30px;transform:scaleX(0.888);transform-origin:0 50%;">M1--Limit</span>
<div class="ld" style="left:811.20px;top:376.60px;width:15.10px;height:14.10px;background:#3f3c2c;"></div>
<span class="t" style="left:833.70px;top:379.00px;font-size:12.30px;transform:scaleX(0.888);transform-origin:0 50%;">M2--Limit</span>
<div class="ld" style="left:811.20px;top:393.50px;width:15.10px;height:14.00px;background:#3f3c2c;"></div>
<span class="t" style="left:833.70px;top:396.00px;font-size:12.30px;transform:scaleX(0.888);transform-origin:0 50%;">M3--Limit</span>
<div class="ld" style="left:811.20px;top:410.30px;width:15.10px;height:14.40px;background:#3f3c2c;"></div>
<span class="t" style="left:833.70px;top:413.00px;font-size:12.30px;transform:scaleX(0.888);transform-origin:0 50%;">M4--Limit</span>
<div class="ld" style="left:811.20px;top:427.30px;width:15.10px;height:14.10px;background:#3f3c2c;"></div>
<span class="t" style="left:833.70px;top:431.00px;font-size:12.30px;transform:scaleX(0.888);transform-origin:0 50%;">M5--Limit</span>
<div class="ld" style="left:811.20px;top:444.20px;width:15.10px;height:14.20px;background:#3f3c2c;"></div>
<span class="t" style="left:833.70px;top:446.00px;font-size:12.30px;transform:scaleX(0.888);transform-origin:0 50%;">M6--Limit</span>
<div class="ld" style="left:811.20px;top:461.20px;width:15.10px;height:14.20px;background:#433f28;"></div>
<span class="t" style="left:832.90px;top:464.00px;font-size:12.30px;transform:scaleX(0.882);transform-origin:0 50%;">Torch UP</span>
<div class="ld" style="left:892.20px;top:325.20px;width:15.10px;height:14.30px;background:#4a4429;"></div>
<span class="t" style="left:912.10px;top:327.00px;font-size:12.30px;transform:scaleX(0.965);transform-origin:0 50%;">EJogA+</span>
<div class="ld" style="left:892.20px;top:342.50px;width:15.10px;height:14.30px;background:#474230;"></div>
<span class="t" style="left:912.10px;top:345.00px;font-size:12.30px;transform:scaleX(0.865);transform-origin:0 50%;">EJogA-</span>
<div class="ld" style="left:892.20px;top:359.40px;width:15.10px;height:14.30px;background:#3f3c2c;"></div>
<span class="t" style="left:912.10px;top:362.00px;font-size:12.30px;transform:scaleX(0.884);transform-origin:0 50%;">M1Home</span>
<div class="ld" style="left:892.20px;top:376.60px;width:15.10px;height:14.10px;background:#3f3c2c;"></div>
<span class="t" style="left:912.10px;top:379.00px;font-size:12.30px;transform:scaleX(0.884);transform-origin:0 50%;">M2Home</span>
<div class="ld" style="left:892.20px;top:393.50px;width:15.10px;height:14.00px;background:#3f3c2c;"></div>
<span class="t" style="left:912.10px;top:396.00px;font-size:12.30px;transform:scaleX(0.884);transform-origin:0 50%;">M3Home</span>
<div class="ld" style="left:892.20px;top:410.30px;width:15.10px;height:14.40px;background:#3f3c2c;"></div>
<span class="t" style="left:912.10px;top:413.00px;font-size:12.30px;transform:scaleX(0.884);transform-origin:0 50%;">M4Home</span>
<div class="ld" style="left:892.20px;top:427.30px;width:15.10px;height:14.10px;background:#3f3c2c;"></div>
<span class="t" style="left:912.10px;top:431.00px;font-size:12.30px;transform:scaleX(0.884);transform-origin:0 50%;">M5Home</span>
<div class="ld" style="left:892.20px;top:444.20px;width:15.10px;height:14.20px;background:#3f3c2c;"></div>
<span class="t" style="left:912.10px;top:446.00px;font-size:12.30px;transform:scaleX(0.884);transform-origin:0 50%;">M6Home</span>
<div class="ld" style="left:892.20px;top:461.20px;width:15.10px;height:14.20px;background:#433f28;"></div>
<span class="t" style="left:912.10px;top:464.00px;font-size:12.30px;transform:scaleX(0.904);transform-origin:0 50%;">Torch Dn</span>
<div class="ld" style="left:640.30px;top:478.00px;width:15.60px;height:14.30px;background:#6b464a;"></div>
<span class="t" style="left:665.40px;top:481.00px;font-size:12.30px;transform:scaleX(0.909);transform-origin:0 50%;">Emergency</span>
<span class="t" style="left:641.00px;top:509.00px;font-size:14.80px;transform:scaleX(1.021);transform-origin:0 50%;">Output Signals current State</span>
<div class="ld" style="left:640.30px;top:532.50px;width:15.30px;height:15.10px;background:#573b3d;"></div>
<span class="t" style="left:663.30px;top:533.00px;font-size:13.00px;transform:scaleX(0.900);transform-origin:0 50%;">Enable 1</span>
<div class="ld" style="left:727.30px;top:532.50px;width:15.30px;height:15.10px;background:#573b3d;"></div>
<span class="t" style="left:750.20px;top:533.00px;font-size:13.00px;transform:scaleX(0.909);transform-origin:0 50%;">Enable 2</span>
<div class="ld" style="left:807.30px;top:532.50px;width:15.30px;height:15.10px;background:#573b3d;"></div>
<span class="t" style="left:829.80px;top:533.00px;font-size:13.00px;transform:scaleX(0.911);transform-origin:0 50%;">Enable 3</span>
<div class="ld" style="left:890.30px;top:532.50px;width:15.30px;height:15.10px;background:#573b3d;"></div>
<span class="t" style="left:912.10px;top:533.00px;font-size:13.00px;transform:scaleX(0.900);transform-origin:0 50%;">Enable 4</span>
<div class="ld" style="left:640.30px;top:553.20px;width:15.30px;height:15.10px;background:#573b3d;"></div>
<span class="t" style="left:664.50px;top:554.00px;font-size:12.60px;transform:scaleX(0.870);transform-origin:0 50%;">Enable 5</span>
<div class="ld" style="left:726.30px;top:553.20px;width:15.30px;height:15.10px;background:#573b3d;"></div>
<span class="t" style="left:747.60px;top:555.00px;font-size:13.60px;transform:scaleX(0.869);transform-origin:0 50%;">Enable 6</span>
<div class="ld" style="left:640.30px;top:574.00px;width:15.30px;height:15.10px;background:#573b3d;"></div>
<span class="t" style="left:662.30px;top:573.00px;font-size:12.60px;transform:scaleX(0.888);transform-origin:0 50%;">Output 1</span>
<div class="ld" style="left:727.30px;top:574.00px;width:15.30px;height:15.10px;background:#573b3d;"></div>
<span class="t" style="left:750.20px;top:574.00px;font-size:12.40px;transform:scaleX(0.883);transform-origin:0 50%;">Output 2</span>
<div class="ld" style="left:807.30px;top:574.00px;width:15.30px;height:15.10px;background:#573b3d;"></div>
<span class="t" style="left:829.80px;top:575.00px;font-size:12.40px;transform:scaleX(0.883);transform-origin:0 50%;">Output 3</span>
<div class="ld" style="left:891.20px;top:575.20px;width:15.30px;height:15.10px;background:#573b3d;"></div>
<span class="t" style="left:912.80px;top:574.00px;font-size:12.40px;transform:scaleX(0.892);transform-origin:0 50%;">Output 4</span>
<div class="ld" style="left:640.30px;top:593.60px;width:15.30px;height:15.10px;background:#573b3d;"></div>
<span class="t" style="left:662.30px;top:595.00px;font-size:12.80px;transform:scaleX(0.892);transform-origin:0 50%;">Output 5</span>
<div class="ld" style="left:727.30px;top:593.60px;width:15.30px;height:15.10px;background:#573b3d;"></div>
<span class="t" style="left:750.20px;top:595.00px;font-size:12.80px;transform:scaleX(0.888);transform-origin:0 50%;">Output 6</span>
<div class="ld" style="left:807.30px;top:593.60px;width:15.30px;height:15.10px;background:#573b3d;"></div>
<span class="t" style="left:831.50px;top:594.00px;font-size:13.00px;transform:scaleX(0.933);transform-origin:0 50%;">Digitize</span>
<span class="t" style="left:658.50px;top:630.00px;font-size:14.00px;">Mach3Mill</span>
</section>
</body></html>
